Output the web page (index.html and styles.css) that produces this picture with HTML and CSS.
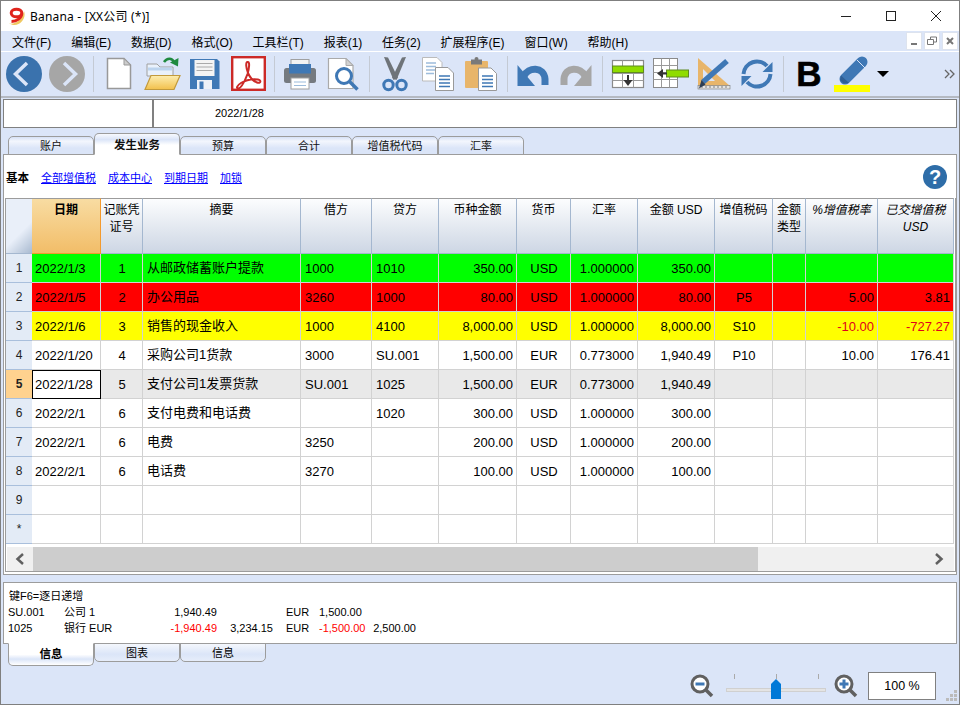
FILE: index.html
```html
<!DOCTYPE html>
<html lang="zh-CN">
  <head>
    <meta charset="utf-8">
    <title>Banana</title>
    <link rel="stylesheet" href="styles.css">
  </head>
  <body>
    <div class="window">
      <div class="titlebar">
        <svg class="logo" width="18" height="18" viewBox="0 0 18 18">
          <path d="M1 16.500C8 17.500 14 13 16 4C18.500 11 13 18.500 5 18z" fill="#f0c860"/>
          <ellipse cx="8.500" cy="6" rx="5.300" ry="3.800" fill="#fff" stroke="#e0241c" stroke-width="3"/>
          <path d="M13.800 6.500C13.500 11 9 14.500 3.500 14.500" fill="none" stroke="#e0241c" stroke-width="3"/>
        </svg>
        <span class="title">Banana - [XX公司 (*)]</span>
        <div class="winbtns">
          <svg width="12" height="12" viewBox="0 0 12 12"><path d="M1 6.500h10" stroke="#222"/></svg>
          <svg width="12" height="12" viewBox="0 0 12 12"><rect x="1.500" y="1.500" width="9" height="9" fill="none" stroke="#222"/></svg>
          <svg width="12" height="12" viewBox="0 0 12 12"><path d="M1 1l10 10M11 1L1 11" stroke="#222"/></svg>
        </div>
      </div>

      <div class="menubar">
        <span>文件(F)</span>
        <span>编辑(E)</span>
        <span>数据(D)</span>
        <span>格式(O)</span>
        <span>工具栏(T)</span>
        <span>报表(1)</span>
        <span>任务(2)</span>
        <span>扩展程序(E)</span>
        <span>窗口(W)</span>
        <span>帮助(H)</span>
        <div class="mdibtns">
          <div class="mdibtn"><svg width="10" height="10" viewBox="0 0 10 10"><path d="M2 8h6" stroke="#777" stroke-width="2"/></svg></div>
          <div class="mdibtn"><svg width="10" height="10" viewBox="0 0 10 10"><path d="M3.500 3V1h6v5H7M.5 3.500h6v5h-6z" fill="none" stroke="#777"/></svg></div>
          <div class="mdibtn"><svg width="10" height="10" viewBox="0 0 10 10"><path d="M2 2l6 6M8 2L2 8" stroke="#777" stroke-width="2"/></svg></div>
        </div>
      </div>

      <div class="toolbar">
        <div class="tool"><svg viewBox="0 0 40 38"><circle cx="20" cy="19" r="18" fill="#3a72ad"/><path d="M23 8L11.500 19L23 30" fill="none" stroke="#dbe5f8" stroke-width="3.500"/></svg></div>
        <div class="tool"><svg viewBox="0 0 40 38"><circle cx="20" cy="19" r="18" fill="#a6a6a6"/><path d="M17 8L28.500 19L17 30" fill="none" stroke="#dbe5f8" stroke-width="3.500"/></svg></div>
        <div class="sep"></div>
        <div class="tool"><svg viewBox="0 0 40 38"><path d="M8.500 3.500H25L31.500 10V33.500H8.500z" fill="#fff" stroke="#999" stroke-width="1.500"/><path d="M25 3.500V10H31.500z" fill="#ccc" stroke="#999"/></svg></div>
        <div class="tool">
          <svg viewBox="0 0 40 38">
            <defs><linearGradient id="folder" x1="0" y1="0" x2="0" y2="1"><stop offset="0" stop-color="#fdeeb0"/><stop offset="1" stop-color="#f2c04c"/></linearGradient></defs>
            <path d="M5 21V9h10l3 3h13v9z" fill="#e9f1fb" stroke="#a0a0a0"/>
            <path d="M6 14h24" stroke="#bcd4ee" stroke-width="3"/>
            <path d="M3 34.500L9 20.500H38L32 34.500z" fill="url(#folder)" stroke="#c29a3c" stroke-width="1.200"/>
            <path d="M22 7C25 2.500 30 2.500 32 7" fill="none" stroke="#1f8a3f" stroke-width="2.500"/>
            <path d="M28 7.500L36 11.500L36.500 3z" fill="#1f8a3f"/>
          </svg>
        </div>
        <div class="tool">
          <svg viewBox="0 0 40 38">
            <path d="M5 4H32L34.500 6.500V34H5z" fill="#4079b6"/>
            <rect x="9.500" y="5" width="20" height="16" fill="#f4f4f4"/>
            <path d="M11.500 8.500h16M11.500 12h16M11.500 15.500h16" stroke="#aaa"/>
            <rect x="12" y="25" width="15" height="9" fill="#eef2f8"/>
            <rect x="14.500" y="26.500" width="4" height="7.500" fill="#4079b6"/>
          </svg>
        </div>
        <div class="tool">
          <svg viewBox="0 0 40 38">
            <rect x="4.200" y="2.200" width="32.600" height="32.600" fill="#fff" stroke="#cc2a27" stroke-width="2.400"/>
            <path d="M19.500 7c-2 .2-1.500 6 .5 11 2.200 5 5 8 9 9.500 4 1.500 4.500-2.500 1-3-5-.7-12 .5-17 3.500-4 2.500-5 5.500-3 5.500 3 0 7-8 9.500-14.500 1.500-4.500 2.500-12.200.500-12z" fill="none" stroke="#cc2a27" stroke-width="2"/>
          </svg>
        </div>
        <div class="sep"></div>
        <div class="tool">
          <svg viewBox="0 0 40 38">
            <rect x="11" y="4.500" width="18" height="8" fill="#f2f2f2" stroke="#a0a0a0"/>
            <rect x="4" y="13" width="32" height="15" rx="2.500" fill="#757a80"/>
            <rect x="9" y="9" width="22" height="9.500" fill="#3f78b5"/>
            <rect x="11" y="23" width="18" height="11" fill="#fff" stroke="#a0a0a0"/>
            <path d="M14 27h12M14 30.500h12" stroke="#9dbcdc"/>
          </svg>
        </div>
        <div class="tool">
          <svg viewBox="0 0 40 38">
            <path d="M5.500 3.500H23L30 10.500V33.500H5.500z" fill="#fff" stroke="#aaa" stroke-width="1.200"/>
            <path d="M23 3.500V10.500H30z" fill="#d2d2d2" stroke="#aaa"/>
            <circle cx="21" cy="21" r="7.500" fill="#fff" stroke="#3f78b5" stroke-width="3"/>
            <path d="M26.500 26.500L34.500 34.500" stroke="#3f78b5" stroke-width="3.500"/>
          </svg>
        </div>
        <div class="sep"></div>
        <div class="tool">
          <svg viewBox="0 0 40 38">
            <path d="M9 2L13 2.500L23 23L18.500 25z" fill="#6f7479"/>
            <path d="M31 2L27 2.500L17 23L21.500 25z" fill="#6f7479"/>
            <circle cx="13.500" cy="30" r="4.700" fill="none" stroke="#3f78b5" stroke-width="3"/>
            <circle cx="26.500" cy="30" r="4.700" fill="none" stroke="#3f78b5" stroke-width="3"/>
          </svg>
        </div>
        <div class="tool">
          <svg viewBox="0 0 40 38">
            <path d="M4.500 2.500H19L24 7.500V26H4.500z" fill="#fff" stroke="#bbb"/>
            <path d="M8 8h10M8 11.500h10M8 15h10M8 18.500h8" stroke="#9dbcdc" stroke-width="1.500"/>
            <path d="M17.500 12.500H30L35.500 18V35.500H17.500z" fill="#fff" stroke="#999"/>
            <path d="M21 21h11M21 24.500h11M21 28h11M21 31.500h11" stroke="#3f78b5" stroke-width="1.500"/>
          </svg>
        </div>
        <div class="tool">
          <svg viewBox="0 0 40 38">
            <rect x="4" y="6" width="23" height="27" rx="1" fill="#e8b56a"/>
            <rect x="10" y="4.500" width="11" height="5" fill="#7a7a7a"/>
            <circle cx="15.500" cy="4" r="2" fill="#7a7a7a"/>
            <path d="M17.500 13H30L35.500 18.500V35.500H17.500z" fill="#fff" stroke="#999"/>
            <path d="M21 21h11M21 24.500h11M21 28h11M21 31.500h11" stroke="#3f78b5" stroke-width="1.500"/>
          </svg>
        </div>
        <div class="sep"></div>
        <div class="tool">
          <svg viewBox="0 0 40 38"><path d="M11 21C15 12 31 11 32 24V30" fill="none" stroke="#3f78b5" stroke-width="7"/><path d="M4.500 10V31H22z" fill="#3f78b5"/></svg>
        </div>
        <div class="tool">
          <svg viewBox="0 0 40 38"><path d="M29 21C25 12 9 11 8 24V30" fill="none" stroke="#a6a6a6" stroke-width="7"/><path d="M35.500 10V31H18z" fill="#a6a6a6"/></svg>
        </div>
        <div class="sep"></div>
        <div class="tool">
          <svg viewBox="0 0 40 38">
            <rect x="4.500" y="5.500" width="31" height="27" fill="#fff" stroke="#8a8a8a" stroke-width="1.200"/>
            <path d="M4.500 11.500h31M4.500 18.500h31M4.500 25.500h31M14.500 5.500v27M25.500 5.500v27" stroke="#9a9a9a"/>
            <rect x="4.500" y="11" width="31" height="6.500" fill="#8fdc00" stroke="#5f8a20"/>
            <path d="M20 20v8" stroke="#333" stroke-width="2"/>
            <path d="M15.500 25h9L20 31z" fill="#333"/>
          </svg>
        </div>
        <div class="tool">
          <svg viewBox="0 0 40 38">
            <rect x="2.500" y="3.500" width="24" height="29" fill="#fff" stroke="#8a8a8a"/>
            <path d="M2.500 10.500h24M2.500 17.500h24M2.500 24.500h24M10.500 3.500v29M18.500 3.500v29" stroke="#9a9a9a"/>
            <rect x="15.500" y="15" width="22" height="7" fill="#8fdc00" stroke="#5f8a20"/>
            <path d="M9 18.500h7" stroke="#333" stroke-width="2"/>
            <path d="M12 14v9L6 18.500z" fill="#333"/>
          </svg>
        </div>
        <div class="tool">
          <svg viewBox="0 0 40 38">
            <path d="M4 3V31H36z" fill="#e8b56a"/>
            <path d="M9 14V26H21z" fill="#dbe5f8"/>
            <rect x="4" y="30.500" width="32" height="3.500" fill="#e4e4e4" stroke="#777" stroke-width=".6"/>
            <path d="M8 31v2M12 31v2M16 31v2M20 31v2M24 31v2M28 31v2M32 31v2" stroke="#555" stroke-width=".7"/>
            <path d="M9 27L33 6" stroke="#3f78b5" stroke-width="5.500"/>
            <path d="M5 33.500L7.500 25L11.500 29.500z" fill="#2c3e55"/>
          </svg>
        </div>
        <div class="tool">
          <svg viewBox="0 0 40 38">
            <path d="M6.500 19A13.500 13.500 0 0 1 30 11" fill="none" stroke="#3f78b5" stroke-width="4"/>
            <path d="M35.500 7V17H25.500z" fill="#3f78b5"/>
            <path d="M33.500 19A13.500 13.500 0 0 1 10 27" fill="none" stroke="#3f78b5" stroke-width="4"/>
            <path d="M4.500 31V21H14.500z" fill="#3f78b5"/>
          </svg>
        </div>
        <div class="sep"></div>
        <div class="tool bold-tool">B</div>
        <div class="tool">
          <svg viewBox="0 0 40 38">
            <rect x="2" y="30" width="36" height="7" fill="#ffff00"/>
            <path d="M13 24L30 7" stroke="#3f78b5" stroke-width="11" stroke-linecap="round"/>
            <path d="M9 20.500L17 28L11.500 28.500L8 25z" fill="#2f5f95"/>
            <path d="M25 5L33 13" stroke="#dbe5f8" stroke-width="1"/>
          </svg>
        </div>
        <div class="drop-arrow"></div>
        <svg class="more" width="11" height="10" viewBox="0 0 11 10"><path d="M1 1l4 4-4 4M6 1l4 4-4 4" fill="none" stroke="#666" stroke-width="1.300"/></svg>
      </div>

      <div class="formula">
        <div class="cellname"></div>
        <div class="cellvalue">2022/1/28</div>
      </div>

      <div class="tabs">
        <div class="tab">账户</div>
        <div class="tab active">发生业务</div>
        <div class="tab">预算</div>
        <div class="tab">合计</div>
        <div class="tab">增值税代码</div>
        <div class="tab">汇率</div>
      </div>

      <div class="panel">
        <div class="views">
          <b>基本</b>
          <a href="#">全部增值税</a>
          <a href="#">成本中心</a>
          <a href="#">到期日期</a>
          <a href="#">加锁</a>
          <div class="help">?</div>
        </div>

        <div class="gridframe">
          <table>
            <colgroup>
              <col class="c-row"><col class="c-date"><col class="c-doc"><col class="c-desc"><col class="c-debit"><col class="c-credit"><col class="c-camt">
              <col class="c-cur"><col class="c-rate"><col class="c-amt"><col class="c-vat"><col class="c-type"><col class="c-pct"><col class="c-paid">
            </colgroup>
            <thead>
              <tr>
                <th class="corner"></th>
                <th class="selcol">日期</th>
                <th>记账凭证号</th>
                <th>摘要</th>
                <th>借方</th>
                <th>贷方</th>
                <th>币种金额</th>
                <th>货币</th>
                <th>汇率</th>
                <th>金额 USD</th>
                <th>增值税码</th>
                <th>金额类型</th>
                <th class="it">%增值税率</th>
                <th class="it">已交增值税 USD</th>
              </tr>
            </thead>
            <tbody>
              <tr class="green">
                <td class="rh">1</td><td class="date">2022/1/3</td><td class="ctr">1</td><td class="desc">从邮政储蓄账户提款</td><td>1000</td><td>1010</td><td class="num">350.00</td>
                <td class="ctr">USD</td><td class="num">1.000000</td><td class="num">350.00</td><td class="ctr"></td><td></td><td class="num"></td><td class="num"></td>
              </tr>
              <tr class="red">
                <td class="rh">2</td><td class="date">2022/1/5</td><td class="ctr">2</td><td class="desc">办公用品</td><td>3260</td><td>1000</td><td class="num">80.00</td>
                <td class="ctr">USD</td><td class="num">1.000000</td><td class="num">80.00</td><td class="ctr">P5</td><td></td><td class="num">5.00</td><td class="num">3.81</td>
              </tr>
              <tr class="yellow">
                <td class="rh">3</td><td class="date">2022/1/6</td><td class="ctr">3</td><td class="desc">销售的现金收入</td><td>1000</td><td>4100</td><td class="num">8,000.00</td>
                <td class="ctr">USD</td><td class="num">1.000000</td><td class="num">8,000.00</td><td class="ctr">S10</td><td></td><td class="num neg">-10.00</td><td class="num neg">-727.27</td>
              </tr>
              <tr>
                <td class="rh">4</td><td class="date">2022/1/20</td><td class="ctr">4</td><td class="desc">采购公司1货款</td><td>3000</td><td>SU.001</td><td class="num">1,500.00</td>
                <td class="ctr">EUR</td><td class="num">0.773000</td><td class="num">1,940.49</td><td class="ctr">P10</td><td></td><td class="num">10.00</td><td class="num">176.41</td>
              </tr>
              <tr class="current">
                <td class="rh">5</td><td class="date activecell">2022/1/28</td><td class="ctr">5</td><td class="desc">支付公司1发票货款</td><td>SU.001</td><td>1025</td><td class="num">1,500.00</td>
                <td class="ctr">EUR</td><td class="num">0.773000</td><td class="num">1,940.49</td><td></td><td></td><td></td><td></td>
              </tr>
              <tr>
                <td class="rh">6</td><td class="date">2022/2/1</td><td class="ctr">6</td><td class="desc">支付电费和电话费</td><td></td><td>1020</td><td class="num">300.00</td>
                <td class="ctr">USD</td><td class="num">1.000000</td><td class="num">300.00</td><td></td><td></td><td></td><td></td>
              </tr>
              <tr>
                <td class="rh">7</td><td class="date">2022/2/1</td><td class="ctr">6</td><td class="desc">电费</td><td>3250</td><td></td><td class="num">200.00</td>
                <td class="ctr">USD</td><td class="num">1.000000</td><td class="num">200.00</td><td></td><td></td><td></td><td></td>
              </tr>
              <tr>
                <td class="rh">8</td><td class="date">2022/2/1</td><td class="ctr">6</td><td class="desc">电话费</td><td>3270</td><td></td><td class="num">100.00</td>
                <td class="ctr">USD</td><td class="num">1.000000</td><td class="num">100.00</td><td></td><td></td><td></td><td></td>
              </tr>
              <tr>
                <td class="rh">9</td><td></td><td></td><td></td><td></td><td></td><td></td><td></td><td></td><td></td><td></td><td></td><td></td><td></td>
              </tr>
              <tr>
                <td class="rh">*</td><td></td><td></td><td></td><td></td><td></td><td></td><td></td><td></td><td></td><td></td><td></td><td></td><td></td>
              </tr>
            </tbody>
          </table>
          <div class="hscroll">
            <div class="sbtn"><svg width="10" height="12" viewBox="0 0 10 12"><path d="M8 1L2.500 6L8 11" fill="none" stroke="#606060" stroke-width="2.500"/></svg></div>
            <div class="sthumb"></div>
            <div class="sbtn right"><svg width="10" height="12" viewBox="0 0 10 12"><path d="M2 1L7.500 6L2 11" fill="none" stroke="#606060" stroke-width="2.500"/></svg></div>
          </div>
        </div>
      </div>

      <div class="info">
        <div class="infohead">键F6=逐日递增</div>
        <div class="inforow">
          <span>SU.001</span><span>公司 1</span><span class="r">1,940.49</span><span class="r"></span><span class="cur">EUR</span><span class="r">1,500.00</span><span class="r"></span>
        </div>
        <div class="inforow">
          <span>1025</span><span>银行 EUR</span><span class="r minus">-1,940.49</span><span class="r">3,234.15</span><span class="cur">EUR</span><span class="r minus">-1,500.00</span><span class="r">2,500.00</span>
        </div>
      </div>

      <div class="bottomtabs">
        <div class="btab active">信息</div>
        <div class="btab">图表</div>
        <div class="btab">信息</div>
      </div>

      <div class="statusbar">
        <svg width="24" height="24" viewBox="0 0 24 24">
          <circle cx="10" cy="10" r="8" fill="#fff" stroke="#606060" stroke-width="3"/>
          <path d="M16 16l6 6" stroke="#606060" stroke-width="3.500"/>
          <path d="M5.500 10h9" stroke="#3f78b5" stroke-width="3"/>
        </svg>
        <div class="slider">
          <i class="tick t1"></i><i class="tick t2"></i><i class="tick t3"></i>
          <div class="track"></div>
          <div class="thumb"></div>
        </div>
        <svg width="24" height="24" viewBox="0 0 24 24">
          <circle cx="10" cy="10" r="8" fill="#fff" stroke="#606060" stroke-width="3"/>
          <path d="M16 16l6 6" stroke="#606060" stroke-width="3.500"/>
          <path d="M5.500 10h9M10 5.500v9" stroke="#3f78b5" stroke-width="3"/>
        </svg>
        <div class="percent">100 %</div>
        <svg class="grip" width="11" height="11" viewBox="0 0 11 11"><path d="M8 0h3v3H8zM4 4h3v3H4zM8 4h3v3H8zM0 8h3v3H0zM4 8h3v3H4zM8 8h3v3H8z" fill="#bbb"/></svg>
      </div>
    </div>
  </body>
</html>
```
FILE: styles.css
```css
* {
  box-sizing: border-box;
}

body {
  margin: 0;
  font-family: "Liberation Sans", "Noto Sans CJK SC", sans-serif;
  font-size: 12px;
  color: #000;
}

.window {
  width: 960px;
  height: 705px;
  border: 1px solid #7f7f7f;
  background-color: #dbe5f8;
  display: flex;
  flex-direction: column;
  overflow: hidden;
}

/* title bar */
.titlebar {
  height: 30px;
  flex: none;
  background-color: #fff;
  display: flex;
  align-items: center;
  padding-left: 7px;
}
.logo {
  margin-right: 4px;
}
.title {
  font-family: "Noto Sans", "Noto Sans CJK SC", sans-serif;
  font-size: 12px;
  letter-spacing: 0.2px;
}
.winbtns {
  margin-left: auto;
  margin-right: 17px;
  display: flex;
  gap: 33px;
}

/* menu */
.menubar {
  height: 20px;
  flex: none;
  display: flex;
  align-items: center;
  gap: 19.800px;
  padding-left: 11px;
}
.mdibtns {
  margin-left: auto;
  margin-right: 1px;
  display: flex;
  gap: 2px;
}
.mdibtn {
  width: 16px;
  height: 18px;
  background-color: #fff;
  border: 1px solid #dde3ee;
  display: flex;
  align-items: center;
  justify-content: center;
}

/* toolbar */
.toolbar {
  height: 47px;
  flex: none;
  display: flex;
  align-items: center;
  padding-left: 1.5px;
  border-top: 1px solid #fff;
  border-bottom: 2px solid #b4b9c2;
}
.tool {
  width: 43px;
  height: 38px;
  display: flex;
  justify-content: center;
  align-items: center;
}
.tool svg {
  width: 40px;
  height: 38px;
}
.sep {
  width: 9px;
  height: 36px;
  background: linear-gradient(#c4cad4, #c4cad4) center / 1px 100% no-repeat;
}
.bold-tool {
  font-size: 35px;
  font-weight: bold;
  -webkit-text-stroke: 0.6px #000;
}
.drop-arrow {
  width: 0;
  height: 0;
  margin-left: 3px;
  border-left: 6px solid transparent;
  border-right: 6px solid transparent;
  border-top: 6px solid #000;
}
.more {
  margin-left: auto;
  margin-right: 4px;
}

/* formula bar */
.formula {
  height: 29px;
  flex: none;
  margin: 1px 2px 0;
  display: flex;
  background-color: #fff;
  border: 1px solid #808080;
}
.cellname {
  width: 150px;
  border-right: 2px solid #808080;
}
.cellvalue {
  padding-left: 61px;
  line-height: 27px;
  font-size: 11px;
}

/* sheet tabs */
.tabs {
  height: 27px;
  flex: none;
  display: flex;
  align-items: flex-end;
  padding-left: 7px;
  position: relative;
  z-index: 1;
  margin-bottom: -1px;
}
.tab {
  width: 86px;
  height: 19px;
  border: 1px solid #9c9c9c;
  border-radius: 5px 5px 0 0;
  background: linear-gradient(#d6e1f6, #f3f6fd 25%, #dbe5f8 65%);
  text-align: center;
  font-size: 11px;
  line-height: 19px;
  color: #111;
}
.tab.active {
  height: 22px;
  background: linear-gradient(#f7f9fe, #dbe5f8 28%, #fff 55%);
  border-bottom: 1px solid #fff;
  font-size: 11.500px;
  font-weight: bold;
  line-height: 22px;
}

/* main panel */
.panel {
  height: 421px;
  flex: none;
  margin: 0 2px;
  background-color: #fff;
  border: 1px solid #9c9c9c;
  padding: 0 0 2px 1px;
}
.views {
  height: 43px;
  display: flex;
  align-items: center;
  gap: 12px;
  padding-left: 1px;
  font-size: 11px;
}
.views b {
  font-size: 11.500px;
}
.views a {
  color: #0000ff;
}
.help {
  margin-left: auto;
  margin-right: 9px;
  width: 24px;
  height: 24px;
  border-radius: 50%;
  background-color: #2e6da8;
  color: #fff;
  font-size: 20px;
  font-weight: bold;
  line-height: 24px;
  text-align: center;
}

.gridframe {
  width: 951px;
  height: 374px;
  border: 1px solid #9c9c9c;
  border-top: 0;
}

table {
  table-layout: fixed;
  width: 948px;
  border-collapse: separate;
  border-spacing: 0;
  font-size: 13px;
}
.c-row { width: 26px; }
.c-date { width: 69px; }
.c-doc { width: 42px; }
.c-desc { width: 158px; }
.c-debit { width: 71px; }
.c-credit { width: 67px; }
.c-camt { width: 78px; }
.c-cur { width: 54px; }
.c-rate { width: 67px; }
.c-amt { width: 77px; }
.c-vat { width: 58px; }
.c-type { width: 33px; }
.c-pct { width: 72px; }
.c-paid { width: 76px; }

th {
  height: 56px;
  padding: 3px 1px 0;
  vertical-align: top;
  font-size: 12px;
  font-weight: normal;
  line-height: 17px;
  background: linear-gradient(#fcfdfe, #cdd6e4);
  border-top: 1px solid #9c9c9c;
  border-right: 1px solid #a4b7cf;
  border-bottom: 1px solid #a4b7cf;
}
th.it {
  font-style: italic;
}
th.corner {
  background: linear-gradient(135deg, #e9eff9 60%, #a9bad0 100%);
  border-right: 0;
}
th.selcol {
  background: linear-gradient(#f8dca2, #f2bd68);
  border-color: #9c9c9c #f39a2e #f39a2e #f39a2e;
  border-width: 1px 1px 1px 0;
  font-weight: bold;
}

td {
  height: 29px;
  padding: 0 3px 0 4px;
  border-right: 1px solid #d2d2d2;
  border-bottom: 1px solid #d2d2d2;
  white-space: nowrap;
  overflow: hidden;
}
td.rh {
  padding: 0;
  text-align: center;
  font-size: 12px;
  color: #222;
  background-color: #e3ebf6;
  border-right: 0;
  border-bottom: 1px solid #a9bfdc;
}
td.date {
  padding-left: 3px;
}
td.desc {
  padding-left: 4px;
  padding-bottom: 3px;
}
.ctr {
  text-align: center;
}
.num {
  text-align: right;
}
tr.green td:not(.rh) {
  background-color: #00ff00;
}
tr.red td:not(.rh) {
  background-color: #ff0000;
}
tr.yellow td:not(.rh) {
  background-color: #ffff00;
}
tr.current td:not(.rh) {
  background-color: #e9e9e9;
}
tr.current td.rh {
  background-color: #ffd28f;
  font-weight: bold;
}
tr.current td.activecell {
  background-color: #fff;
  outline: 1px solid #000;
  outline-offset: -1px;
}
td.neg {
  color: #e0001c;
}

/* scrollbar under the grid */
.hscroll {
  height: 24px;
  margin: 3px 1px 0;
  display: flex;
  background-color: #f0f0f0;
}
.sbtn {
  width: 26px;
  display: flex;
  align-items: center;
  justify-content: center;
}
.sbtn.right {
  margin-left: auto;
  width: 30px;
}
.sthumb {
  width: 725px;
  background-color: #cdcdcd;
}

/* info panel */
.info {
  height: 62px;
  flex: none;
  margin: 7px 2px 0;
  padding: 5px 0 0 4px;
  background-color: #fff;
  border: 1px solid #9c9c9c;
  font-size: 11px;
}
.infohead {
  height: 16px;
  line-height: 16px;
  padding-left: 1px;
}
.inforow {
  display: grid;
  grid-template-columns: 56px 90px 63px 56px 46px 42px 55px;
  height: 16px;
  line-height: 16px;
}
.inforow .r {
  text-align: right;
}
.inforow .cur {
  padding-left: 13px;
}
.minus {
  color: #f00;
}

/* bottom tabs */
.bottomtabs {
  height: 23px;
  flex: none;
  display: flex;
  align-items: flex-start;
  padding-left: 7px;
  margin-top: -1px;
  position: relative;
}
.btab {
  width: 86px;
  height: 19px;
  border: 1px solid #9c9c9c;
  border-radius: 0 0 5px 5px;
  background: linear-gradient(#f4f7fd, #dbe5f8 60%, #e6edfa);
  text-align: center;
  font-size: 11px;
  line-height: 18px;
}
.btab.active {
  height: 23px;
  border-top: 1px solid #fff;
  background: linear-gradient(#fff 50%, #dbe5f8 72%, #fff);
  font-weight: bold;
  font-size: 11.500px;
  line-height: 21px;
}

/* zoom controls */
.statusbar {
  flex: 1;
  display: flex;
  align-items: center;
  justify-content: flex-end;
  padding-right: 2px;
  padding-top: 2px;
}
.slider {
  position: relative;
  width: 100px;
  height: 26px;
  margin: 0 8px 0 12px;
}
.track {
  position: absolute;
  left: 0;
  right: 0;
  top: 15px;
  height: 4px;
  background-color: #e4e4e4;
  border: 1px solid #d0d0d0;
}
.tick {
  position: absolute;
  top: 1px;
  width: 1px;
  height: 5px;
  background-color: #aaa;
}
.t1 { left: 8px; }
.t2 { left: 50px; }
.t3 { left: 92px; }
.thumb {
  position: absolute;
  left: 45px;
  top: 6px;
  width: 10px;
  height: 20px;
  background-color: #0078d7;
  clip-path: polygon(50% 0, 100% 25%, 100% 100%, 0 100%, 0 25%);
}
.percent {
  width: 68px;
  height: 28px;
  margin-left: 10px;
  background-color: #fff;
  border: 1px solid #808080;
  text-align: center;
  line-height: 26px;
  font-size: 12.500px;
}
.grip {
  margin-left: 10px;
  align-self: flex-end;
  margin-bottom: 3px;
}
```
